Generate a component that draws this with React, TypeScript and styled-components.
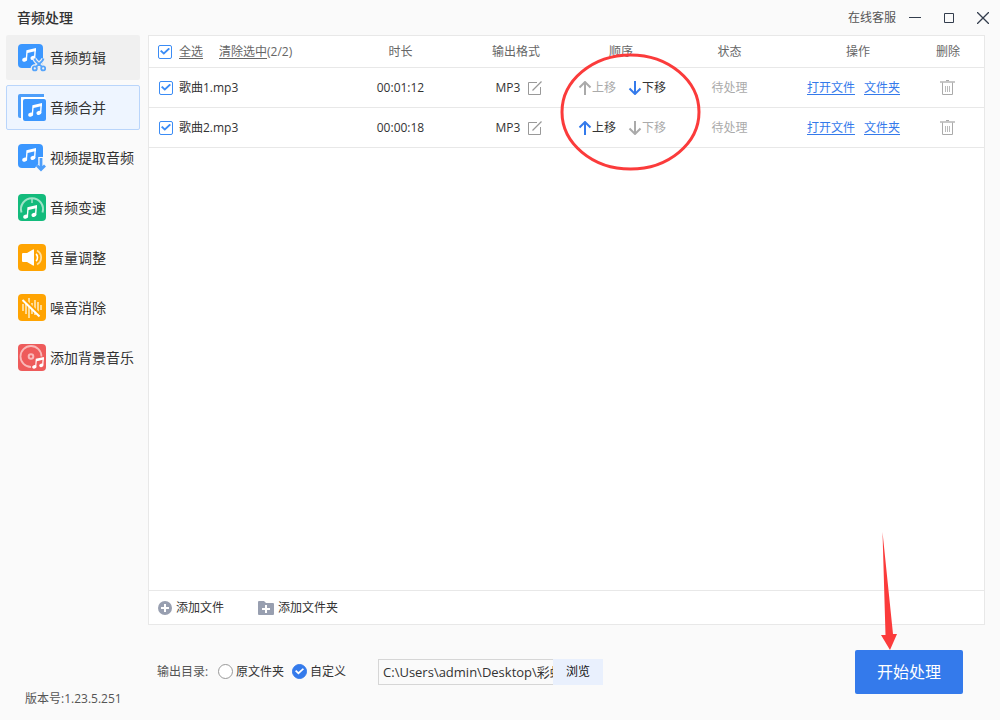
import React, { useState } from "react";
import styled, { createGlobalStyle, css } from "styled-components";

const GlobalStyle = createGlobalStyle`
  *, *::before, *::after { box-sizing: border-box; }
  body {
    margin: 0;
    background: #fafafa;
    color: #333;
    font-family: "Open Sans", "Noto Sans CJK SC", sans-serif;
    font-size: 12px;
    line-height: 16px;
  }
  button, input { font: inherit; color: inherit; }
`;

const Shell = styled.div`
  display: flex;
  flex-direction: column;
  min-height: 100vh;
`;

const TitleBar = styled.header`
  display: flex;
  align-items: center;
  height: 35px;
  padding-left: 17px;
`;

const AppTitle = styled.h1`
  flex: 1;
  margin: 0;
  font-size: 14px;
  line-height: 20px;
  font-weight: 500;
`;

const ServiceLink = styled.a`
  margin-right: 2px;
  color: #555;
  text-decoration: none;
`;

const PlainButton = styled.button`
  display: inline-flex;
  align-items: center;
  padding: 0;
  border: 0;
  background: none;
  white-space: nowrap;
  cursor: pointer;
`;

const WindowButton = styled(PlainButton)`
  justify-content: center;
  width: 34px;
  height: 34px;
`;

const Body = styled.div`
  flex: 1;
  display: grid;
  grid-template-columns: 148px minmax(0, 1fr);
`;

const Sidebar = styled.aside`
  display: flex;
  flex-direction: column;
  padding: 0 8px 13px 6px;
`;

const Nav = styled.nav`
  display: flex;
  flex-direction: column;
  gap: 5px;
`;

const NavItem = styled(PlainButton)<{ $state?: "hover" | "active" }>`
  height: 45px;
  padding-left: 11px;
  gap: 4px;
  border: 1px solid transparent;
  border-radius: 2px;
  font-size: 14px;
  line-height: 20px;
  ${(p) => p.$state === "hover" && css`background: #f0f0f0;`}
  ${(p) =>
    p.$state === "active" &&
    css`
      background: #eef5ff;
      border-color: #b9d5fb;
    `}
`;

const Version = styled.div`
  margin-top: auto;
  padding-left: 19px;
  color: #555;
`;

const Main = styled.main`
  display: flex;
  flex-direction: column;
  padding-right: 15px;
`;

const Panel = styled.section`
  flex: 1;
  display: flex;
  flex-direction: column;
  border: 1px solid #e8e8e8;
  background: #fff;
`;

const TableArea = styled.div`
  flex: 1;
`;

const FileTable = styled.table`
  width: 100%;
  table-layout: fixed;
  border-collapse: separate;
  border-spacing: 0;
`;

const Column = styled.col<{ $width?: number }>`
  width: ${(p) => (p.$width ? `${p.$width}px` : "auto")};
`;

const HeadCell = styled.th<{ $left?: boolean; $last?: boolean }>`
  height: 32px;
  padding: 0 ${(p) => (p.$last ? 16 : 0)}px 0 ${(p) => (p.$left ? 9 : 0)}px;
  border-bottom: 1px solid #e8e8e8;
  color: #666;
  font-weight: 400;
  text-align: ${(p) => (p.$left ? "left" : "center")};
`;

const Cell = styled.td<{ $left?: number; $right?: number; $muted?: boolean }>`
  position: relative;
  height: 40px;
  padding: 0 ${(p) => p.$right ?? 0}px 0 ${(p) => p.$left ?? 0}px;
  border-bottom: 1px solid #e8e8e8;
  color: ${(p) => (p.$muted ? "#aaa" : "#333")};
  text-align: center;
`;

const Inline = styled.div<{ $gap: number; $center?: boolean }>`
  display: flex;
  align-items: center;
  justify-content: ${(p) => (p.$center ? "center" : "flex-start")};
  gap: ${(p) => p.$gap}px;
`;

const CheckLabel = styled.label<{ $gap: number }>`
  display: flex;
  align-items: center;
  gap: ${(p) => p.$gap}px;
`;

const Underlined = styled.span`
  text-decoration: underline;
  text-underline-offset: 2px;
`;

const checkShape = css`
  content: "";
  position: absolute;
  background: currentColor;
  clip-path: polygon(0 46%, 14% 30%, 38% 58%, 86% 4%, 100% 18%, 38% 92%);
`;

const Checkbox = styled.input.attrs({ type: "checkbox" })`
  appearance: none;
  position: relative;
  flex: none;
  width: 14px;
  height: 14px;
  margin: 0;
  border: 1px solid #3b8cf5;
  border-radius: 2px;
  background: #fff;
  color: #3b8cf5;
  &:checked::after {
    ${checkShape}
    inset: 2px 1px;
  }
`;

const Radio = styled.input.attrs({ type: "radio" })`
  appearance: none;
  position: relative;
  flex: none;
  width: 15px;
  height: 15px;
  margin: 0;
  border: 1px solid #999;
  border-radius: 50%;
  background: #fff;
  color: #fff;
  &:checked {
    border-color: #347aeb;
    background: #347aeb;
  }
  &:checked::after {
    ${checkShape}
    inset: 3px 2px;
  }
`;

const MoveButton = styled(PlainButton)`
  color: #333;
  svg { color: #347aeb; }
  &:disabled, &:disabled svg { color: #aaa; }
`;

const FileLink = styled.a`
  color: #347aeb;
  text-decoration: underline;
  text-underline-offset: 2px;
`;

const Toolbar = styled.div`
  display: flex;
  align-items: center;
  gap: 34px;
  height: 34px;
  padding-left: 9px;
  border-top: 1px solid #e8e8e8;
`;

const AddButton = styled(PlainButton)`
  gap: 4px;
`;

const Footer = styled.footer`
  display: flex;
  align-items: center;
  height: 95px;
  padding: 0 22px 2px 9px;
`;

const OutputOptions = styled.fieldset`
  display: flex;
  align-items: center;
  gap: 8px;
  margin: 0;
  padding: 0;
  border: 0;
`;

const OutputLabel = styled.span`
  width: 53px;
  color: #555;
`;

const RadioLabel = styled.label`
  display: inline-flex;
  align-items: center;
  gap: 3px;
`;

const PathGroup = styled.div`
  display: flex;
  margin-left: 32px;
`;

const PathInput = styled.input`
  width: 175px;
  height: 26px;
  padding: 0 0 0 4px;
  border: 1px solid #d6d6d6;
  border-right: 0;
  border-radius: 0;
  background: #fafafa;
  font-size: 13px;
  outline: none;
`;

const BrowseButton = styled(PlainButton)`
  justify-content: center;
  width: 50px;
  height: 26px;
  background: #e9f0fd;
  color: #111;
`;

const StartArea = styled.div`
  position: relative;
  margin-left: auto;
`;

const StartButton = styled(PlainButton)`
  display: flex;
  justify-content: center;
  width: 108px;
  height: 44px;
  border-radius: 2px;
  background: #347aeb;
  color: #fff;
  font-size: 16px;
  line-height: 24px;
`;

const CircleMark = styled.svg`
  position: absolute;
  z-index: 1;
  left: -11px;
  top: -15px;
  pointer-events: none;
`;

const ArrowMark = styled.svg`
  position: absolute;
  left: 24px;
  bottom: 100%;
  pointer-events: none;
`;

const Note = ({ x, y }: { x: number; y: number }) => (
  <g transform={`translate(${x} ${y})`} fill="#fff">
    <path d="M4.4 2.2 14 0v3L5.6 4.9 5 11.6H3.7Z" />
    <path d="M12.5 1H14l-.7 9h-1.4Z" />
    <ellipse cx="2.7" cy="11.6" rx="2.6" ry="2" transform="rotate(-18 2.7 11.6)" />
    <ellipse cx="10.9" cy="9.9" rx="2.5" ry="2" transform="rotate(-18 10.9 9.9)" />
  </g>
);

const Tile = ({ children }: { children: React.ReactNode }) => (
  <svg width="28" height="28" viewBox="0 0 28 28" fill="none" aria-hidden="true">
    {children}
  </svg>
);

const Scissors = () => (
  <>
    <circle cx="16.8" cy="24.4" r="2" />
    <circle cx="25.2" cy="24.4" r="2" />
    <path d="M16.500 14.500c.5 3.500 5 5 7.300 8.200M25.500 14.500c-.5 3.500-5 5-7.300 8.200" />
  </>
);

const CutIcon = () => (
  <Tile>
    <rect width="25" height="24" rx="4" fill="#3b97ff" />
    <Note x={4} y={4} />
    <g stroke="#f0f0f0" strokeWidth="4.500"><Scissors /></g>
    <g stroke="#55a4fb" strokeWidth="1.800"><Scissors /></g>
  </Tile>
);

const MergeIcon = () => (
  <Tile>
    <path d="M2 0h24v3H3v21H2a2 2 0 0 1-2-2V2a2 2 0 0 1 2-2Z" fill="#4d9efa" />
    <rect x="3" y="3" width="25" height="24" rx="2" fill="#fff" />
    <rect x="5" y="5" width="23" height="22" rx="2" fill="#3b97ff" />
    <Note x={10} y={9} />
  </Tile>
);

const ExtractIcon = () => (
  <Tile>
    <rect width="25" height="24" rx="4" fill="#3b97ff" />
    <Note x={4} y={4} />
    <path d="M23 13v12M19 21.500l4 4 4-4" stroke="#fafafa" strokeWidth="5.500" />
    <path d="M23 14v11M19 21.500l4 4 4-4" stroke="#4d9efa" strokeWidth="2.800" />
  </Tile>
);

const SpeedIcon = () => (
  <Tile>
    <rect width="28" height="27" rx="4" fill="#13bb7c" />
    <path d="M3.500 18.500A11 11 0 1 1 24.500 18.500" stroke="#9fe3c8" strokeWidth="2" />
    <path d="M14 5v4" stroke="#9fe3c8" strokeWidth="1.600" />
    <Note x={5} y={11} />
  </Tile>
);

const VolumeIcon = () => (
  <Tile>
    <rect width="28" height="27" rx="4" fill="#ffa402" />
    <path d="M4 10q0-1 1-1h4l6-3.500q1-.5 1 .5v15q0 1-1 .5L9 18H5q-1 0-1-1Z" fill="#fff" />
    <path d="M18 10c2 1.500 2 5.500 0 7" stroke="#fff" strokeWidth="1.600" />
    <path d="M19 6.500c5.500 3 5.500 11 0 14" stroke="#ffe0a3" strokeWidth="1.800" />
  </Tile>
);

const NoiseIcon = () => (
  <Tile>
    <rect width="28" height="27" rx="4" fill="#ffa402" />
    <path d="M5 10v7M8 8v12M11 4v20M14 9v11M17 6v15M20 8v12M23 11v5" stroke="#ffe0a3" strokeWidth="1.800" />
    <path d="M5.500 5 22.500 21" stroke="#ffa402" strokeWidth="2.500" />
    <path d="M4.500 6 21.500 22.500" stroke="#fff" strokeWidth="2" />
  </Tile>
);

const BackgroundIcon = () => (
  <Tile>
    <rect width="28" height="27" rx="4" fill="#ee5b5b" />
    <path d="M13 23A10.500 10.500 0 1 1 23.500 12.500" stroke="#f9b9b9" strokeWidth="1.800" />
    <circle cx="13" cy="12.500" r="2.300" stroke="#f9b9b9" strokeWidth="2" />
    <g transform="translate(14 13) scale(.85)"><Note x={0} y={0} /></g>
  </Tile>
);

const MoveIcon = ({ down }: { down?: boolean }) => (
  <svg width="14" height="14" viewBox="0 0 14 14" fill="none" stroke="currentColor" strokeWidth="2" aria-hidden="true">
    <path d={down ? "M7 0v12.500M1.500 7.500 7 13l5.500-5.500" : "M7 14V1.500M1.500 6.500 7 1l5.500 5.500"} />
  </svg>
);

const EditIcon = () => (
  <svg width="14" height="14" viewBox="0 0 14 14" fill="none" stroke="#999" aria-hidden="true">
    <path d="M9 1.500H.5v12h12V6" />
    <path d="M4.500 9.500 13.500.5" strokeWidth="1.300" />
  </svg>
);

const TrashIcon = () => (
  <svg width="15" height="15" viewBox="0 0 15 15" fill="none" stroke="#aaa" aria-hidden="true">
    <path d="M0 2h15" strokeWidth="1.300" />
    <path d="M2.500 2.500v12h10v-12M6 .5h3" />
    <path d="M5.500 6v6M7.500 6v6M9.500 6v6" stroke="#bbb" />
  </svg>
);

const navItems: { label: string; icon: React.ReactNode; state?: "hover" | "active" }[] = [
  { label: "音频剪辑", icon: <CutIcon />, state: "hover" },
  { label: "音频合并", icon: <MergeIcon />, state: "active" },
  { label: "视频提取音频", icon: <ExtractIcon /> },
  { label: "音频变速", icon: <SpeedIcon /> },
  { label: "音量调整", icon: <VolumeIcon /> },
  { label: "噪音消除", icon: <NoiseIcon /> },
  { label: "添加背景音乐", icon: <BackgroundIcon /> },
];

const files = [
  { name: "歌曲1.mp3", duration: "00:01:12" },
  { name: "歌曲2.mp3", duration: "00:00:18" },
];

export default function App() {
  const [target, setTarget] = useState("custom");

  return (
    <Shell>
      <GlobalStyle />
      <TitleBar>
        <AppTitle>音频处理</AppTitle>
        <ServiceLink href="#service">在线客服</ServiceLink>
        <WindowButton aria-label="最小化">
          <svg width="12" height="12" stroke="#333d4d"><path d="M0 5.500h12" /></svg>
        </WindowButton>
        <WindowButton aria-label="最大化">
          <svg width="10" height="10" fill="none" stroke="#333d4d"><path d="M.5.5h9v9h-9Z" /></svg>
        </WindowButton>
        <WindowButton aria-label="关闭">
          <svg width="12" height="12" stroke="#333d4d" strokeWidth="1.300"><path d="m0 0 12 12M12 0 0 12" /></svg>
        </WindowButton>
      </TitleBar>
      <Body>
        <Sidebar>
          <Nav>
            {navItems.map((item) => (
              <NavItem key={item.label} $state={item.state}>
                {item.icon}
                {item.label}
              </NavItem>
            ))}
          </Nav>
          <Version>版本号:1.23.5.251</Version>
        </Sidebar>
        <Main>
          <Panel>
            <TableArea>
              <FileTable>
                <colgroup>
                  <Column />
                  <Column $width={121} />
                  <Column $width={110} />
                  <Column $width={100} />
                  <Column $width={117} />
                  <Column $width={140} />
                  <Column $width={56} />
                </colgroup>
                <thead>
                  <tr>
                    <HeadCell $left>
                      <Inline $gap={16}>
                        <CheckLabel $gap={7}>
                          <Checkbox defaultChecked />
                          <Underlined>全选</Underlined>
                        </CheckLabel>
                        <PlainButton><Underlined>清除选中</Underlined>(2/2)</PlainButton>
                      </Inline>
                    </HeadCell>
                    <HeadCell>时长</HeadCell>
                    <HeadCell>输出格式</HeadCell>
                    <HeadCell>顺序</HeadCell>
                    <HeadCell>状态</HeadCell>
                    <HeadCell>操作</HeadCell>
                    <HeadCell $last>删除</HeadCell>
                  </tr>
                </thead>
                <tbody>
                  {files.map((file, i) => (
                    <tr key={file.name}>
                      <Cell $left={10}>
                        <CheckLabel $gap={6}>
                          <Checkbox defaultChecked />
                          {file.name}
                        </CheckLabel>
                      </Cell>
                      <Cell>{file.duration}</Cell>
                      <Cell $left={6}>
                        <Inline $gap={8} $center>
                          MP3
                          <PlainButton aria-label="修改格式"><EditIcon /></PlainButton>
                        </Inline>
                      </Cell>
                      <Cell $left={2}>
                        <Inline $gap={12} $center>
                          <MoveButton disabled={i === 0}><MoveIcon />上移</MoveButton>
                          <MoveButton disabled={i === files.length - 1}><MoveIcon down />下移</MoveButton>
                        </Inline>
                        {i === 0 && (
                          <CircleMark width="141" height="118" viewBox="0 0 141 118" fill="none" aria-hidden="true">
                            <ellipse cx="70.500" cy="59" rx="68.500" ry="57" stroke="#fb3b3b" strokeWidth="3" />
                          </CircleMark>
                        )}
                      </Cell>
                      <Cell $muted>待处理</Cell>
                      <Cell $right={9}>
                        <Inline $gap={9} $center>
                          <FileLink href="#open">打开文件</FileLink>
                          <FileLink href="#folder">文件夹</FileLink>
                        </Inline>
                      </Cell>
                      <Cell $right={17}>
                        <Inline $gap={0} $center>
                          <PlainButton aria-label="删除"><TrashIcon /></PlainButton>
                        </Inline>
                      </Cell>
                    </tr>
                  ))}
                </tbody>
              </FileTable>
            </TableArea>
            <Toolbar>
              <AddButton>
                <svg width="14" height="14" viewBox="0 0 14 14" aria-hidden="true">
                  <circle cx="7" cy="7" r="7" fill="#989fb0" />
                  <path d="M7 3v8M3 7h8" stroke="#fff" strokeWidth="2" />
                </svg>
                添加文件
              </AddButton>
              <AddButton>
                <svg width="16" height="14" viewBox="0 0 16 14" aria-hidden="true">
                  <path d="M0 1a1 1 0 0 1 1-1h5l2 2h7a1 1 0 0 1 1 1v10a1 1 0 0 1-1 1H1a1 1 0 0 1-1-1Z" fill="#989fb0" />
                  <path d="M8 4v8M4 8h8" stroke="#fff" strokeWidth="2" />
                </svg>
                添加文件夹
              </AddButton>
            </Toolbar>
          </Panel>
          <Footer>
            <OutputOptions>
              <OutputLabel>输出目录:</OutputLabel>
              <RadioLabel>
                <Radio name="target" checked={target === "source"} onChange={() => setTarget("source")} />
                原文件夹
              </RadioLabel>
              <RadioLabel>
                <Radio name="target" checked={target === "custom"} onChange={() => setTarget("custom")} />
                自定义
              </RadioLabel>
            </OutputOptions>
            <PathGroup>
              <PathInput aria-label="输出目录" defaultValue={"C:\\Users\\admin\\Desktop\\彩虹"} />
              <BrowseButton>浏览</BrowseButton>
            </PathGroup>
            <StartArea>
              <StartButton>开始处理</StartButton>
              <ArrowMark width="20" height="118" viewBox="0 0 20 118" aria-hidden="true">
                <path d="M3.500 0 14 102h4l-7 16L2 103h4.500Z" fill="#fb3b3b" />
              </ArrowMark>
            </StartArea>
          </Footer>
        </Main>
      </Body>
    </Shell>
  );
}
